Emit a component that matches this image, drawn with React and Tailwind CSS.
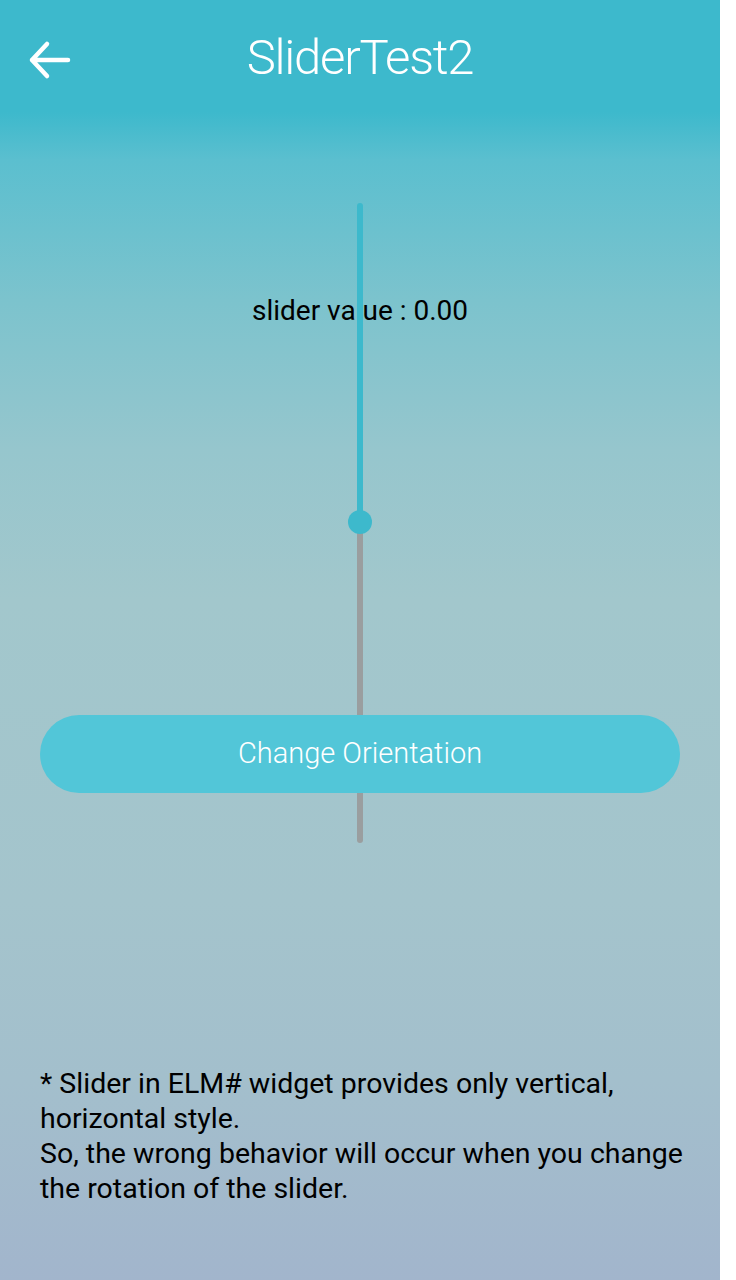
import React from "react";

function BackArrow() {
  return (
    <svg width="44" height="40" viewBox="0 0 44 40" fill="none">
      <path
        d="M40 20H4M19 4L4 20L19 36"
        stroke="white"
        strokeWidth="4.5"
        strokeLinecap="round"
        strokeLinejoin="round"
      />
    </svg>
  );
}

export default function App() {
  return (
    <div className="w-[736px] h-[1280px] bg-white">
      <div
        className="relative w-[720px] h-[1280px] flex flex-col bg-[linear-gradient(to_bottom,#3db9cc_0px,#3db9cc_112px,#5bbfcf_160px,#7cc3cd_300px,#96c6cd_450px,#a2c7cc_600px,#a4c4cc_900px,#a3bfcc_1080px,#a2b5cc_1280px)]"
        style={{ fontFamily: "Roboto, sans-serif" }}
      >
        {/* header */}
        <div className="relative h-[116px] flex items-center justify-center">
          <button className="absolute left-[28px] top-[40px]">
            <BackArrow />
          </button>
          <h1 className="text-white text-[49px] font-light tracking-tight">
            SliderTest2
          </h1>
        </div>

        {/* slider area */}
        <div className="relative flex flex-col items-center">
          <p className="mt-[181px] text-black text-[28px] leading-none">
            slider value : 0.00
          </p>

          {/* vertical slider */}
          <div className="absolute left-[357px] top-[87px] w-[6px] h-[640px] flex flex-col items-center">
            <div className="w-[6px] h-[319px] bg-[#3db9cc] rounded-t-full" />
            <div className="w-[6px] flex-1 bg-[#9a9e9f] rounded-b-full" />
            <div className="absolute top-[307px] w-[24px] h-[24px] rounded-full bg-[#3db9cc]" />
          </div>

          <button className="relative mt-[390px] w-[640px] h-[78px] rounded-full bg-[#52c6d8] text-white text-[29px] font-light">
            Change Orientation
          </button>
        </div>

        {/* note */}
        <div className="mt-[273px] px-[40px] text-black text-[28.5px] leading-[35px] whitespace-nowrap">
          <p>* Slider in ELM# widget provides only vertical,</p>
          <p>horizontal style.</p>
          <p>So, the wrong behavior will occur when you change</p>
          <p>the rotation of the slider.</p>
        </div>
      </div>
    </div>
  );
}
